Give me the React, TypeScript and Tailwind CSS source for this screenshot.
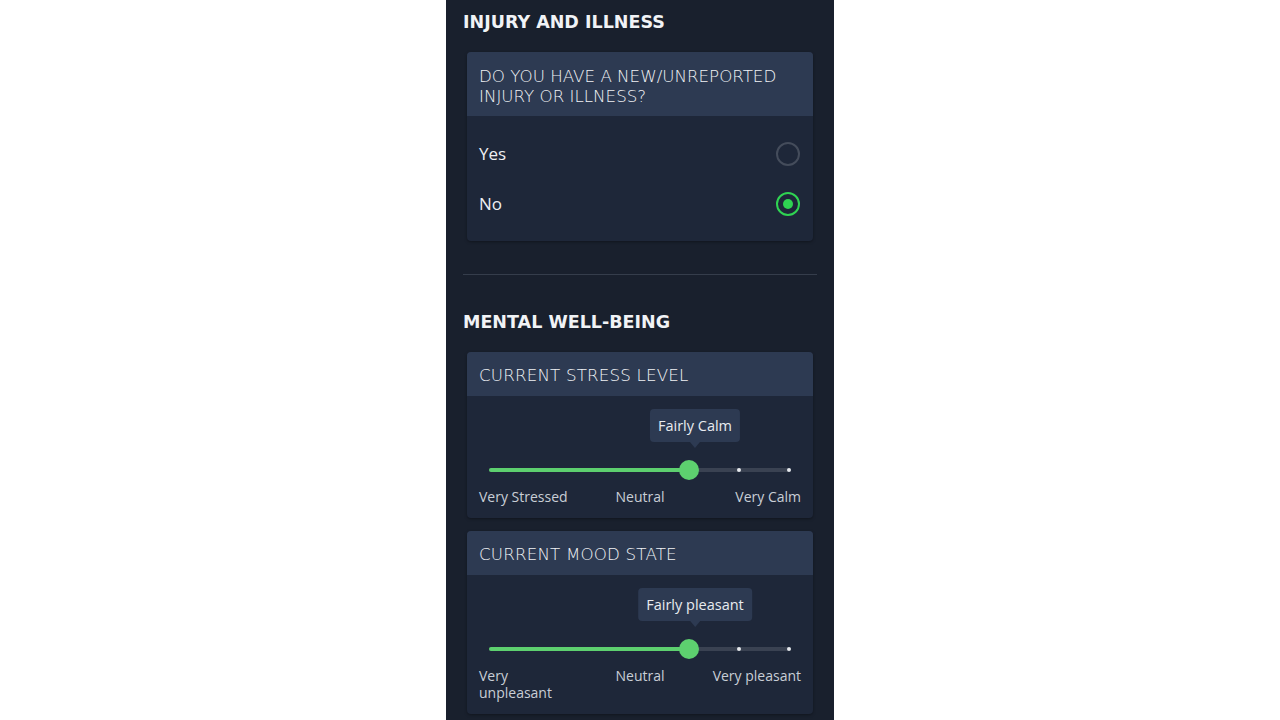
import React from 'react';

// --- Fonts ---
const HEAD = { fontFamily: '"DejaVu Sans", "Liberation Sans", sans-serif' };
const BODY = { fontFamily: '"Open Sans", "Noto Sans", sans-serif' };

// --- Radio ---
const Radio: React.FC<{ checked?: boolean }> = ({ checked }) =>
  checked ? (
    <span className="w-6 h-6 rounded-full border-2 border-[#2fd352] flex items-center justify-center">
      <span className="w-[10px] h-[10px] rounded-full bg-[#2fd352]" />
    </span>
  ) : (
    <span className="w-6 h-6 rounded-full border-2 border-[#444c5b]" />
  );

// --- Slider card ---
interface SliderCardProps {
  title: string;
  value: string;
  left: React.ReactNode;
  right: string;
}
const SliderCard: React.FC<SliderCardProps> = ({ title, value, left, right }) => {
  const steps = 7;
  const current = 4;
  const pct = (current / (steps - 1)) * 100;
  return (
    <div className="rounded bg-[#1e2739] shadow-[0_1px_3px_rgba(0,0,0,0.35)] overflow-hidden">
      <div className="h-[44px] bg-[#2d3a52] px-3 pt-[3px] flex items-center">
        <span style={HEAD} className="text-[16.7px] font-light tracking-[0.01em] text-[#f0f2f5]">{title}</span>
      </div>
      <div className="pl-3 pr-3 pt-[13px] pb-[13px]">
        <div className="relative ml-[10px] mr-[12px] h-[79px]">
          {/* tooltip */}
          <div className="absolute top-0 -translate-x-1/2 ml-[6px] flex flex-col items-center" style={{ left: `${pct}%` }}>
            <div style={BODY} className="h-[33px] px-2 rounded-sm bg-[#2d3a52] text-[14.5px] text-[#e8ebef] flex items-center whitespace-nowrap">
              {value}
            </div>
            <div className="w-0 h-0 border-l-[5px] border-r-[5px] border-t-[6px] border-l-transparent border-r-transparent border-t-[#2d3a52]" />
          </div>
          {/* track */}
          <div className="absolute left-0 right-0 top-[59px] h-[4px] rounded-full bg-[#3a4252]" />
          <div className="absolute left-0 top-[59px] h-[4px] rounded-full bg-[#5dd06f]" style={{ width: `${pct}%` }} />
          {Array.from({ length: steps }).map((_, i) =>
            i > current ? (
              <div
                key={i}
                className="absolute top-[59px] w-[4px] h-[4px] -translate-x-1/2 rounded-full bg-[#e6e9ee]"
                style={{ left: `${(i / (steps - 1)) * 100}%` }}
              />
            ) : null
          )}
          <div
            className="absolute top-[51px] w-[20px] h-[20px] -translate-x-1/2 rounded-full bg-[#5dd06f]"
            style={{ left: `${pct}%` }}
          />
        </div>
        <div style={BODY} className="grid grid-cols-3 text-[14px] leading-[17px] text-[#c9ced6]">
          <span>{left}</span>
          <span className="text-center">Neutral</span>
          <span className="text-right">{right}</span>
        </div>
      </div>
    </div>
  );
};

export default function App() {
  return (
    <div className="min-h-screen bg-white flex justify-center">
      <div className="w-[388px] h-[720px] overflow-hidden bg-[#19202d] px-[17px] pt-[12px]">
        <h2 style={HEAD} className="text-[17.5px] font-bold text-[#f1f3f6] leading-[20px]">
          INJURY AND ILLNESS
        </h2>

        <div className="mt-[20px] mx-[4px] rounded bg-[#1e2739] shadow-[0_1px_3px_rgba(0,0,0,0.35)] overflow-hidden">
          <div className="h-[64px] bg-[#2d3a52] px-3 pt-[3px] flex items-center">
            <span style={HEAD} className="text-[16.7px] leading-[20px] font-light text-[#f0f2f5]">
              DO YOU HAVE A NEW/UNREPORTED
              <br />
              INJURY OR ILLNESS?
            </span>
          </div>
          <div className="pt-[13px] pb-[12px]">
            <div className="h-[50px] pl-3 pr-[13px] flex items-center justify-between">
              <span style={BODY} className="text-[17px] text-[#eef0f3]">Yes</span>
              <Radio />
            </div>
            <div className="h-[50px] pl-3 pr-[13px] flex items-center justify-between">
              <span style={BODY} className="text-[17px] text-[#eef0f3]">No</span>
              <Radio checked />
            </div>
          </div>
        </div>

        <div className="mt-[33px] h-px bg-[#353d4b]" />

        <h2 style={HEAD} className="mt-[37px] text-[17.5px] font-bold text-[#f1f3f6] leading-[20px]">
          MENTAL WELL-BEING
        </h2>

        <div className="mt-[20px] mx-[4px] flex flex-col gap-[13px]">
          <SliderCard title="CURRENT STRESS LEVEL" value="Fairly Calm" left="Very Stressed" right="Very Calm" />
          <SliderCard
            title="CURRENT MOOD STATE"
            value="Fairly pleasant"
            left={<>Very<br />unpleasant</>}
            right="Very pleasant"
          />
        </div>
      </div>
    </div>
  );
}
